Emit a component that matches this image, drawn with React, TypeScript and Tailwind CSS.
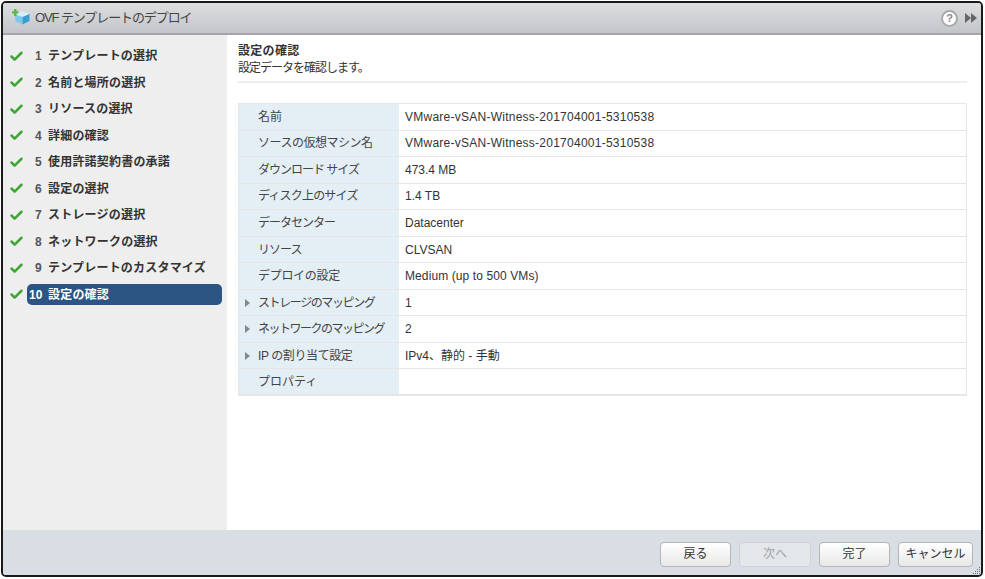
import { Check } from "lucide-react";

const font = "font-['Liberation_Sans','Noto_Sans_CJK_JP',sans-serif]";

const steps = [
  "テンプレートの選択",
  "名前と場所の選択",
  "リソースの選択",
  "詳細の確認",
  "使用許諾契約書の承諾",
  "設定の選択",
  "ストレージの選択",
  "ネットワークの選択",
  "テンプレートのカスタマイズ",
  "設定の確認",
];

const rows = [
  { label: "名前", value: "VMware-vSAN-Witness-201704001-5310538", lt: "", vt: "tracking-[0.25px]" },
  { label: "ソースの仮想マシン名", value: "VMware-vSAN-Witness-201704001-5310538", lt: "tracking-[-0.5px]", vt: "tracking-[0.25px]" },
  { label: "ダウンロード サイズ", value: "473.4 MB", lt: "tracking-[-1px]" },
  { label: "ディスク上のサイズ", value: "1.4 TB", lt: "tracking-[-0.8px]" },
  { label: "データセンター", value: "Datacenter", lt: "tracking-[-1px]" },
  { label: "リソース", value: "CLVSAN", lt: "tracking-[-1px]" },
  { label: "デプロイの設定", value: "Medium (up to 500 VMs)", lt: "tracking-[-0.3px]", vt: "tracking-[0.1px]" },
  { label: "ストレージのマッピング", value: "1", lt: "tracking-[-1.4px]", arrow: true },
  { label: "ネットワークのマッピング", value: "2", lt: "tracking-[-1.5px]", arrow: true },
  { label: "IP の割り当て設定", value: "IPv4、静的 - 手動", lt: "tracking-[-0.4px]", arrow: true },
  { label: "プロパティ", value: "", lt: "" },
];

function BoxIcon() {
  return (
    <svg width="20" height="20" viewBox="0 0 20 20">
      <path d="M9.5 3 L17.5 6 L10.5 9 L3 6.5 Z" fill="#d5f0fa" />
      <path d="M3 6.5 L10.5 9 V16.5 L3.5 13.5 Z" fill="#7cc8ea" />
      <path d="M10.5 9 L17.5 6 V13 L10.5 16.5 Z" fill="#3b9ed3" />
      <path d="M2 1 H4.5 V3.2 H6.5 V5.6 H4.5 V8 H2 V5.6 H0 V3.2 H2 Z" fill="#5fb845" />
    </svg>
  );
}

function Step({ n, label, active }: { n: number; label: string; active: boolean }) {
  return (
    <div className="flex h-[26.5px] items-center">
      <Check size={15} strokeWidth={4} className="ml-[6px] shrink-0 text-[#3fa535]" />
      {active ? (
        <div className="ml-[3px] flex h-[21px] w-[195px] items-center rounded-[5px] bg-[#2c5583] pl-[2px] text-[12px] font-bold text-white">
          <span className="w-[18px]">{n}</span>
          <span className="ml-[1px] tracking-[0.2px]">{label}</span>
        </div>
      ) : (
        <div className="ml-[3px] flex items-center pl-[8px] text-[12px] font-bold text-[#333]">
          <span className="w-[12px] text-[#555]">{n}</span>
          <span className="ml-[1px] tracking-[0.2px]">{label}</span>
        </div>
      )}
    </div>
  );
}

function Row({ label, value, arrow, lt, vt }: { label: string; value: string; arrow?: boolean; lt: string; vt?: string }) {
  return (
    <div className="flex h-[26.55px] border-b border-[#e6e6e6] text-[12px] text-[#333] last:border-b-2">
      <div className="flex w-[160px] shrink-0 items-center bg-[#e4eef5] pl-[6px]">
        <span className="w-[13px] shrink-0">
          {arrow && <span className="block h-0 w-0 border-y-[4px] border-l-[5px] border-y-transparent border-l-[#888]" />}
        </span>
        <span className={`whitespace-nowrap text-[#444] ${lt}`}>{label}</span>
      </div>
      <div className={`flex flex-1 items-center pl-[6px] ${vt ?? ""}`}>{value}</div>
    </div>
  );
}

function FooterButton({ label, disabled, wide }: { label: string; disabled?: boolean; wide?: boolean }) {
  return (
    <button
      className={
        disabled
          ? "h-[25px] w-[72px] rounded-[4px] border border-[#ccd2d6] bg-[#e3e7ea] text-[12px] text-[#a0a5a8]"
          : wide
            ? "h-[25px] w-[75px] rounded-[4px] border border-[#b5b5b5] bg-gradient-to-b from-white to-[#e8e8e8] text-[12px] text-[#333]"
            : "h-[25px] w-[71px] rounded-[4px] border border-[#b5b5b5] bg-gradient-to-b from-white to-[#e8e8e8] text-[12px] text-[#333]"
      }
    >
      {label}
    </button>
  );
}

export default function App() {
  return (
    <div className={`h-[579px] w-[985px] overflow-hidden bg-white pb-[2px] pl-[1px] pr-[2px] pt-[1px] ${font}`}>
      <div className="relative flex h-full flex-col overflow-hidden rounded-[5px] border-2 border-[#1a1a1a]">
        <div className="flex h-[32px] shrink-0 items-center border-b-2 border-[#a3a5a8] bg-gradient-to-b from-[#dcdee0] to-[#c3c6c9] pl-[9px] pr-[4px]">
          <BoxIcon />
          <span className="ml-[3px] text-[13px] tracking-[-1.1px] text-[#444]">OVF テンプレートのデプロイ</span>
          <div className="ml-auto flex items-center gap-[7px]">
            <span className="flex h-[17px] w-[17px] items-center justify-center rounded-full border-2 border-[#aaa] bg-white text-[11px] font-bold text-[#888]">?</span>
            <span className="flex">
              <span className="h-0 w-0 border-y-[5px] border-l-[6px] border-y-transparent border-l-[#666]" />
              <span className="h-0 w-0 border-y-[5px] border-l-[6px] border-y-transparent border-l-[#666]" />
            </span>
          </div>
        </div>
        <div className="flex min-h-0 flex-1">
          <div className="w-[224px] shrink-0 bg-[#eeeeee] pt-[8px]">
            {steps.map((s, i) => (
              <Step key={s + i} n={i + 1} label={s} active={i === 9} />
            ))}
          </div>
          <div className="flex-1 bg-white pl-[11px] pr-[14px] pt-[8px]">
            <div className="border-b-2 border-[#eeeeee] pb-[4px]">
              <div className="text-[12px] font-bold leading-[16px] tracking-[0.3px] text-[#333]">設定の確認</div>
              <div className="pt-[1px] text-[12px] leading-[17px] tracking-[-1px] text-[#333]">設定データを確認します。</div>
            </div>
            <div className="mt-[20px] border border-b-0 border-[#e6e6e6]">
              {rows.map((r) => (
                <Row key={r.label} {...r} />
              ))}
            </div>
          </div>
        </div>
        <div className="flex h-[45px] shrink-0 items-center justify-end gap-[8px] bg-[#d9dee5] pr-[8px] pt-[3px]">
          <FooterButton label="戻る" />
          <FooterButton label="次へ" disabled />
          <FooterButton label="完了" />
          <FooterButton label="キャンセル" wide />
        </div>
        {/* resize grip */}
        <svg width="8" height="8" viewBox="0 0 8 8" className="absolute bottom-0 right-0" fill="#6f747b">
          <rect x="6" y="0" width="1" height="1" />
          <rect x="4" y="2" width="1" height="1" />
          <rect x="6" y="2" width="1" height="1" />
          <rect x="2" y="4" width="1" height="1" />
          <rect x="4" y="4" width="1" height="1" />
          <rect x="6" y="4" width="1" height="1" />
          <rect x="0" y="6" width="1" height="1" />
          <rect x="2" y="6" width="1" height="1" />
          <rect x="4" y="6" width="1" height="1" />
          <rect x="6" y="6" width="1" height="1" />
        </svg>
      </div>
    </div>
  );
}
